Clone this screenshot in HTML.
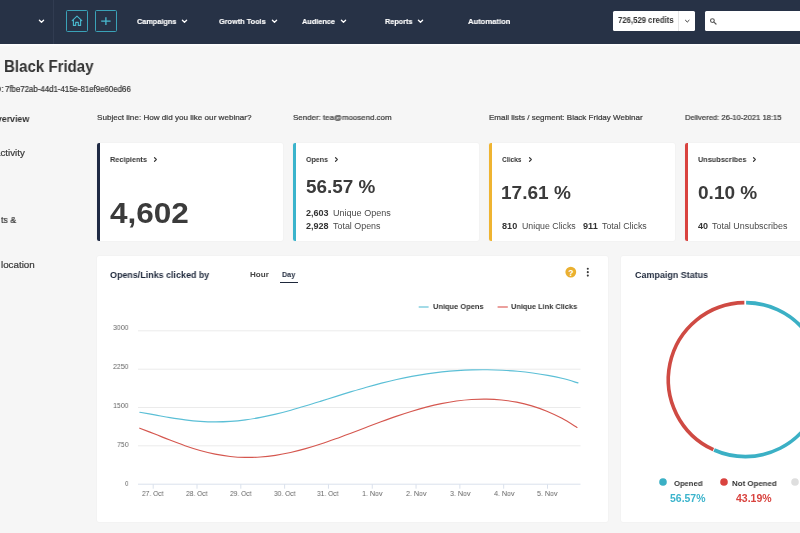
<!DOCTYPE html>
<html><head><meta charset="utf-8"><title>Black Friday</title>
<style>
*{box-sizing:border-box;margin:0;padding:0}
html,body{width:800px;height:533px;overflow:hidden;background:#f6f6f6;font-family:"Liberation Sans",sans-serif;color:#333}
.abs{position:absolute;white-space:nowrap}
.t{position:absolute;white-space:nowrap;line-height:1;transform-origin:0 0;will-change:transform}
#nav{position:absolute;left:0;top:0;width:800px;height:44px;background:#273246}
.ibtn{position:absolute;top:10.3px;width:22px;height:21.6px;border:1px solid #3aa2b8;border-radius:1.5px}
.card{position:absolute;background:#fff;box-shadow:0 0 2px rgba(0,0,0,0.06);border-radius:2px}
</style></head><body>
<div id="nav"></div>
<div class="abs" style="left:0;top:44px;width:800px;height:2.5px;background:linear-gradient(#ffffff,#f6f6f6)"></div>
<div class="abs" style="left:52.5px;top:0;width:1px;height:44px;background:#313c51"></div>
<svg class="abs" style="left:37.9px;top:19.0px" width="7" height="5" viewBox="0 0 7 5"><path d="M1.4 1.3 L3.5 3.3 L5.6 1.3" fill="none" stroke="#fff" stroke-width="1.3" stroke-linecap="round" stroke-linejoin="round"/></svg>
<div class="ibtn" style="left:66px"></div><div class="ibtn" style="left:95px"></div>
<svg class="abs" style="left:66px;top:10px" width="52" height="22" viewBox="66 10 52 22"><path d="M72.2 20.6 L77 16.2 L81.8 20.6 M73.4 19.8 V25.4 H75.7 V22.4 H78.3 V25.4 H80.6 V19.8" fill="none" stroke="#49b9cf" stroke-width="1.1" stroke-linejoin="round" stroke-linecap="round"/><path d="M105.9 17.2 V24.9 M101.2 21.05 H110.6" fill="none" stroke="#49b9cf" stroke-width="1.3"/></svg>
<svg class="abs" style="left:180.9px;top:18.9px" width="7" height="5" viewBox="0 0 7 5"><path d="M1.4 1.3 L3.5 3.3 L5.6 1.3" fill="none" stroke="#fff" stroke-width="1.3" stroke-linecap="round" stroke-linejoin="round"/></svg>
<svg class="abs" style="left:271.0px;top:18.9px" width="7" height="5" viewBox="0 0 7 5"><path d="M1.4 1.3 L3.5 3.3 L5.6 1.3" fill="none" stroke="#fff" stroke-width="1.3" stroke-linecap="round" stroke-linejoin="round"/></svg>
<svg class="abs" style="left:339.5px;top:18.9px" width="7" height="5" viewBox="0 0 7 5"><path d="M1.4 1.3 L3.5 3.3 L5.6 1.3" fill="none" stroke="#fff" stroke-width="1.3" stroke-linecap="round" stroke-linejoin="round"/></svg>
<svg class="abs" style="left:417.0px;top:18.9px" width="7" height="5" viewBox="0 0 7 5"><path d="M1.4 1.3 L3.5 3.3 L5.6 1.3" fill="none" stroke="#fff" stroke-width="1.3" stroke-linecap="round" stroke-linejoin="round"/></svg>
<div class="abs" style="left:612.8px;top:11.2px;width:82.7px;height:19.5px;background:#fff;border-radius:1.5px"></div>
<div class="abs" style="left:678px;top:11.2px;width:1px;height:19.5px;background:#e6e6e6"></div>
<svg class="abs" style="left:684px;top:19px" width="7" height="5" viewBox="684 19 7 5"><path d="M685.5 20.3 L687.3 22 L689.1 20.3" fill="none" stroke="#3a3a3a" stroke-width="1.0" stroke-linecap="round" stroke-linejoin="round"/></svg>
<div class="abs" style="left:705.4px;top:11.2px;width:100px;height:19.5px;background:#fff;border-radius:1.5px"></div>
<svg class="abs" style="left:709px;top:17px" width="9" height="9" viewBox="709 17 9 9"><circle cx="712.4" cy="20.6" r="1.9" fill="none" stroke="#555" stroke-width="1.1"/><path d="M713.9 22.1 L716 24" stroke="#555" stroke-width="1.2" stroke-linecap="round"/></svg>
<div class="card" style="left:97px;top:143px;width:185.5px;height:98.2px"></div><div class="abs" style="left:97px;top:143px;width:2.5px;height:98.2px;background:#1f2a44;border-radius:2px 0 0 2px"></div>
<div class="card" style="left:293px;top:143px;width:185.5px;height:98.2px"></div><div class="abs" style="left:293px;top:143px;width:2.5px;height:98.2px;background:#3bb4cc;border-radius:2px 0 0 2px"></div>
<div class="card" style="left:489px;top:143px;width:185.5px;height:98.2px"></div><div class="abs" style="left:489px;top:143px;width:2.5px;height:98.2px;background:#efb431;border-radius:2px 0 0 2px"></div>
<div class="card" style="left:685px;top:143px;width:185.5px;height:98.2px"></div><div class="abs" style="left:685px;top:143px;width:2.5px;height:98.2px;background:#d9433f;border-radius:2px 0 0 2px"></div>
<svg class="abs" style="left:152.8px;top:155.9px" width="5" height="7" viewBox="0 0 5 7"><path d="M1.5 1.6 L3.3 3.5 L1.5 5.4" fill="none" stroke="#333" stroke-width="1.2" stroke-linecap="round" stroke-linejoin="round"/></svg>
<svg class="abs" style="left:334.2px;top:155.9px" width="5" height="7" viewBox="0 0 5 7"><path d="M1.5 1.6 L3.3 3.5 L1.5 5.4" fill="none" stroke="#333" stroke-width="1.2" stroke-linecap="round" stroke-linejoin="round"/></svg>
<svg class="abs" style="left:528.0px;top:155.9px" width="5" height="7" viewBox="0 0 5 7"><path d="M1.5 1.6 L3.3 3.5 L1.5 5.4" fill="none" stroke="#333" stroke-width="1.2" stroke-linecap="round" stroke-linejoin="round"/></svg>
<svg class="abs" style="left:751.9px;top:155.9px" width="5" height="7" viewBox="0 0 5 7"><path d="M1.5 1.6 L3.3 3.5 L1.5 5.4" fill="none" stroke="#333" stroke-width="1.2" stroke-linecap="round" stroke-linejoin="round"/></svg>
<div class="card" style="left:97px;top:255.5px;width:510.6px;height:266.5px"></div>
<div class="card" style="left:621.3px;top:255.5px;width:200px;height:266.5px"></div>
<div class="abs" style="left:279.8px;top:281.9px;width:18.4px;height:1.5px;background:#1e283b"></div>
<svg class="abs" style="left:564px;top:266px" width="28" height="14" viewBox="564 266 28 14"><circle cx="570.8" cy="272.1" r="5.4" fill="#eab030"/><text x="570.8" y="275.5" font-size="8.5" font-weight="bold" fill="#fff" text-anchor="middle" font-family="Liberation Sans, sans-serif">?</text><circle cx="587.8" cy="268.7" r="1.05" fill="#3a3a3a"/><circle cx="587.8" cy="272.15" r="1.05" fill="#3a3a3a"/><circle cx="587.8" cy="275.6" r="1.05" fill="#3a3a3a"/></svg>
<svg class="abs" style="left:0;top:255px" width="800" height="278" viewBox="0 255 800 278">
<line x1="138" y1="330.8" x2="580.5" y2="330.8" stroke="#ebebeb" stroke-width="1"/>
<line x1="138" y1="369.2" x2="580.5" y2="369.2" stroke="#ebebeb" stroke-width="1"/>
<line x1="138" y1="407.5" x2="580.5" y2="407.5" stroke="#ebebeb" stroke-width="1"/>
<line x1="138" y1="445.8" x2="580.5" y2="445.8" stroke="#ebebeb" stroke-width="1"/>
<line x1="138" y1="484.2" x2="580.5" y2="484.2" stroke="#dae1ec" stroke-width="1"/>
<line x1="153.20" y1="484.2" x2="153.20" y2="488.7" stroke="#dae1ec" stroke-width="1"/>
<line x1="197.01" y1="484.2" x2="197.01" y2="488.7" stroke="#dae1ec" stroke-width="1"/>
<line x1="240.82" y1="484.2" x2="240.82" y2="488.7" stroke="#dae1ec" stroke-width="1"/>
<line x1="284.63" y1="484.2" x2="284.63" y2="488.7" stroke="#dae1ec" stroke-width="1"/>
<line x1="328.44" y1="484.2" x2="328.44" y2="488.7" stroke="#dae1ec" stroke-width="1"/>
<line x1="372.25" y1="484.2" x2="372.25" y2="488.7" stroke="#dae1ec" stroke-width="1"/>
<line x1="416.06" y1="484.2" x2="416.06" y2="488.7" stroke="#dae1ec" stroke-width="1"/>
<line x1="459.87" y1="484.2" x2="459.87" y2="488.7" stroke="#dae1ec" stroke-width="1"/>
<line x1="503.68" y1="484.2" x2="503.68" y2="488.7" stroke="#dae1ec" stroke-width="1"/>
<line x1="547.49" y1="484.2" x2="547.49" y2="488.7" stroke="#dae1ec" stroke-width="1"/>
<path d="M139.75 412.24 C142.27 412.69 149.82 414.02 154.86 414.92 C159.90 415.81 164.94 416.80 169.97 417.63 C175.01 418.46 180.05 419.26 185.09 419.89 C190.12 420.51 195.16 421.04 200.20 421.38 C205.24 421.72 210.27 421.91 215.31 421.91 C220.35 421.92 225.39 421.75 230.42 421.41 C235.46 421.07 240.50 420.55 245.53 419.89 C250.57 419.22 255.61 418.38 260.65 417.42 C265.68 416.46 270.72 415.34 275.76 414.14 C280.80 412.93 285.83 411.59 290.87 410.20 C295.91 408.81 300.95 407.31 305.98 405.80 C311.02 404.29 316.06 402.70 321.09 401.12 C326.13 399.54 331.17 397.92 336.21 396.35 C341.24 394.77 346.28 393.18 351.32 391.65 C356.36 390.12 361.39 388.61 366.43 387.19 C371.47 385.76 376.51 384.38 381.54 383.09 C386.58 381.80 391.62 380.57 396.66 379.45 C401.69 378.32 406.73 377.28 411.77 376.35 C416.80 375.41 421.84 374.57 426.88 373.83 C431.92 373.09 436.95 372.46 441.99 371.92 C447.03 371.39 452.07 370.95 457.10 370.62 C462.14 370.29 467.18 370.05 472.22 369.92 C477.25 369.78 482.29 369.74 487.33 369.80 C492.36 369.85 497.40 370.00 502.44 370.25 C507.48 370.50 512.51 370.84 517.55 371.29 C522.59 371.74 527.63 372.28 532.66 372.95 C537.70 373.62 542.74 374.38 547.78 375.32 C552.81 376.26 557.85 377.30 562.89 378.56 C567.93 379.83 575.48 382.19 578.00 382.92" fill="none" stroke="#5bbfd6" stroke-width="1.15" stroke-linecap="round"/>
<path d="M139.75 428.18 C142.26 429.15 149.80 432.06 154.83 434.04 C159.85 436.02 164.88 438.13 169.91 440.07 C174.93 442.02 179.96 443.96 184.98 445.69 C190.01 447.42 195.03 449.06 200.06 450.47 C205.09 451.87 210.11 453.11 215.14 454.11 C220.16 455.11 225.19 455.90 230.22 456.45 C235.24 457.00 240.27 457.31 245.29 457.41 C250.32 457.50 255.34 457.35 260.37 457.00 C265.40 456.65 270.42 456.07 275.45 455.31 C280.47 454.55 285.50 453.57 290.53 452.46 C295.55 451.34 300.58 450.03 305.60 448.62 C310.63 447.21 315.66 445.63 320.68 443.98 C325.71 442.34 330.73 440.57 335.76 438.77 C340.78 436.97 345.81 435.07 350.84 433.18 C355.86 431.30 360.89 429.35 365.91 427.46 C370.94 425.56 375.97 423.64 380.99 421.80 C386.02 419.96 391.04 418.13 396.07 416.41 C401.09 414.69 406.12 413.02 411.15 411.48 C416.17 409.94 421.20 408.48 426.22 407.17 C431.25 405.87 436.28 404.67 441.30 403.65 C446.33 402.63 451.35 401.74 456.38 401.05 C461.41 400.36 466.43 399.82 471.46 399.49 C476.48 399.16 481.51 399.01 486.53 399.09 C491.56 399.16 496.59 399.43 501.61 399.95 C506.64 400.46 511.66 401.19 516.69 402.18 C521.72 403.17 526.74 404.38 531.77 405.89 C536.79 407.40 541.82 409.15 546.84 411.22 C551.87 413.30 556.90 415.64 561.92 418.34 C566.95 421.04 574.49 425.92 577.00 427.44" fill="none" stroke="#d5574f" stroke-width="1.15" stroke-linecap="round"/>
<line x1="418.7" y1="307" x2="428.6" y2="307" stroke="#4fbad2" stroke-width="1.05"/>
<line x1="497.6" y1="307" x2="507.8" y2="307" stroke="#d94a44" stroke-width="1.05"/>
<path d="M746.11 302.60 A77.0 77.0 0 1 1 714.10 450.00" fill="none" stroke="#3bb0c5" stroke-width="3.6"/>
<path d="M713.37 449.67 A77.0 77.0 0 0 1 744.36 302.61" fill="none" stroke="#cf4a43" stroke-width="3.6"/>
<circle cx="663" cy="482" r="3.8" fill="#3bb0c5"/><circle cx="724" cy="482" r="3.8" fill="#d9433f"/><circle cx="795" cy="482" r="3.8" fill="#dedede"/>
</svg>
<div class="t" style="left:136.50px;top:17.63px;font-size:8px;font-weight:bold;color:#fff;-webkit-text-stroke:0.15px #fff;transform:scaleX(0.9113)">Campaigns</div>
<div class="t" style="left:219.30px;top:17.63px;font-size:8px;font-weight:bold;color:#fff;-webkit-text-stroke:0.15px #fff;transform:scaleX(0.9164)">Growth Tools</div>
<div class="t" style="left:302.00px;top:17.63px;font-size:8px;font-weight:bold;color:#fff;-webkit-text-stroke:0.15px #fff;transform:scaleX(0.9163)">Audience</div>
<div class="t" style="left:384.50px;top:17.63px;font-size:8px;font-weight:bold;color:#fff;-webkit-text-stroke:0.15px #fff;transform:scaleX(0.9098)">Reports</div>
<div class="t" style="left:467.50px;top:17.63px;font-size:8px;font-weight:bold;color:#fff;-webkit-text-stroke:0.15px #fff;transform:scaleX(0.9540)">Automation</div>
<div class="t" style="left:618.00px;top:17.26px;font-size:8.2px;font-weight:bold;color:#333;transform:scaleX(0.9465)">726,529 credits</div>
<div class="t" style="left:3.96px;top:58.66px;font-size:16px;font-weight:bold;color:#333;transform:scaleX(0.9410)">Black Friday</div>
<div class="t" style="left:5.25px;top:84.89px;font-size:8.4px;font-weight:normal;color:#333;-webkit-text-stroke:0.2px #333;transform:scaleX(0.9374)">7fbe72ab-44d1-415e-81ef9e60ed66</div>
<div class="t" style="left:-7.50px;top:84.89px;font-size:8.4px;font-weight:normal;color:#333;-webkit-text-stroke:0.2px #333;transform:scaleX(0.9735)">ID:</div>
<div class="t" style="left:-9.90px;top:114.27px;font-size:9.6px;font-weight:bold;color:#333;transform:scaleX(0.9189)">Overview</div>
<div class="t" style="left:-6.50px;top:148.07px;font-size:9.6px;font-weight:normal;color:#3a3a3a;-webkit-text-stroke:0.2px #333;transform:scaleX(1.0135)">Activity</div>
<div class="t" style="left:1.10px;top:214.64px;font-size:9.4px;font-weight:normal;color:#3a3a3a;-webkit-text-stroke:0.2px #333;transform:scaleX(0.9351)">ts &amp;</div>
<div class="t" style="left:1.40px;top:259.97px;font-size:9.6px;font-weight:normal;color:#3a3a3a;-webkit-text-stroke:0.2px #333;transform:scaleX(1.0204)">location</div>
<div class="t" style="left:97.00px;top:113.83px;font-size:8px;font-weight:normal;color:#3c3c3c;-webkit-text-stroke:0.22px #3c3c3c;transform:scaleX(1.0126)">Subject line: How did you like our webinar?</div>
<div class="t" style="left:293.00px;top:113.83px;font-size:8px;font-weight:normal;color:#3c3c3c;-webkit-text-stroke:0.22px #3c3c3c;transform:scaleX(0.9893)">Sender: tea@moosend.com</div>
<div class="t" style="left:489.00px;top:113.83px;font-size:8px;font-weight:normal;color:#3c3c3c;-webkit-text-stroke:0.22px #3c3c3c;transform:scaleX(0.9999)">Email lists / segment: Black Friday Webinar</div>
<div class="t" style="left:685.00px;top:113.83px;font-size:8px;font-weight:normal;color:#3c3c3c;-webkit-text-stroke:0.22px #3c3c3c;transform:scaleX(0.9514)">Delivered: 26-10-2021 18:15</div>
<div class="t" style="left:110.00px;top:155.53px;font-size:8px;font-weight:bold;color:#333;transform:scaleX(0.9145)">Recipients</div>
<div class="t" style="left:110.00px;top:198.05px;font-size:30.3px;font-weight:bold;color:#3b3b3b;transform:scaleX(1.0405)">4,602</div>
<div class="t" style="left:306.00px;top:155.53px;font-size:8px;font-weight:bold;color:#333;transform:scaleX(0.8842)">Opens</div>
<div class="t" style="left:306.00px;top:177.50px;font-size:18.9px;font-weight:bold;color:#3b3b3b;transform:scaleX(0.9997)">56.57 %</div>
<div class="t" style="left:305.60px;top:209.40px;font-size:8.5px;font-weight:bold;color:#333;transform:scaleX(1.0630)">2,603</div>
<div class="t" style="left:332.75px;top:209.40px;font-size:8.5px;font-weight:normal;color:#4a4a4a;transform:scaleX(1.0630)">Unique Opens</div>
<div class="t" style="left:305.60px;top:221.80px;font-size:8.5px;font-weight:bold;color:#333;transform:scaleX(1.0630)">2,928</div>
<div class="t" style="left:332.75px;top:221.80px;font-size:8.5px;font-weight:normal;color:#4a4a4a;transform:scaleX(1.0474)">Total Opens</div>
<div class="t" style="left:502.00px;top:155.53px;font-size:8px;font-weight:bold;color:#333;transform:scaleX(0.8291)">Clicks</div>
<div class="t" style="left:501.49px;top:184.00px;font-size:18.9px;font-weight:bold;color:#3b3b3b;transform:scaleX(1.0070)">17.61 %</div>
<div class="t" style="left:502.00px;top:222.00px;font-size:8.5px;font-weight:bold;color:#333;transform:scaleX(1.0723)">810</div>
<div class="t" style="left:521.50px;top:222.00px;font-size:8.5px;font-weight:normal;color:#4a4a4a;transform:scaleX(1.0346)">Unique Clicks</div>
<div class="t" style="left:582.50px;top:222.00px;font-size:8.5px;font-weight:bold;color:#333;transform:scaleX(1.0725)">911</div>
<div class="t" style="left:602.00px;top:222.00px;font-size:8.5px;font-weight:normal;color:#4a4a4a;transform:scaleX(1.0414)">Total Clicks</div>
<div class="t" style="left:697.70px;top:155.53px;font-size:8px;font-weight:bold;color:#333;transform:scaleX(0.9148)">Unsubscribes</div>
<div class="t" style="left:697.70px;top:183.70px;font-size:18.9px;font-weight:bold;color:#3b3b3b;transform:scaleX(1.0082)">0.10 %</div>
<div class="t" style="left:697.70px;top:221.90px;font-size:8.5px;font-weight:bold;color:#333;transform:scaleX(1.0589)">40</div>
<div class="t" style="left:711.90px;top:221.90px;font-size:8.5px;font-weight:normal;color:#4a4a4a;transform:scaleX(1.0495)">Total Unsubscribes</div>
<div class="t" style="left:109.80px;top:270.81px;font-size:9.2px;font-weight:bold;color:#1e283b;transform:scaleX(0.9717)">Opens/Links clicked by</div>
<div class="t" style="left:249.50px;top:270.83px;font-size:8px;font-weight:bold;color:#444;transform:scaleX(1.0080)">Hour</div>
<div class="t" style="left:282.00px;top:270.83px;font-size:8px;font-weight:bold;color:#1e283b;transform:scaleX(0.8997)">Day</div>
<div class="t" style="left:433.00px;top:303.00px;font-size:7.8px;font-weight:bold;color:#333;transform:scaleX(0.9568)">Unique Opens</div>
<div class="t" style="left:511.40px;top:303.00px;font-size:7.8px;font-weight:bold;color:#333;transform:scaleX(0.9486)">Unique Link Clicks</div>
<div class="t" style="left:112.70px;top:324.40px;font-size:7.8px;font-weight:normal;color:#666;transform:scaleX(0.8940)">3000</div>
<div class="t" style="left:112.70px;top:363.40px;font-size:7.8px;font-weight:normal;color:#666;transform:scaleX(0.8940)">2250</div>
<div class="t" style="left:112.70px;top:402.40px;font-size:7.8px;font-weight:normal;color:#666;transform:scaleX(0.8940)">1500</div>
<div class="t" style="left:116.70px;top:441.30px;font-size:7.8px;font-weight:normal;color:#666;transform:scaleX(0.8850)">750</div>
<div class="t" style="left:124.80px;top:480.30px;font-size:7.8px;font-weight:normal;color:#666;transform:scaleX(0.8000)">0</div>
<div class="t" style="left:142.20px;top:490.20px;font-size:7.8px;font-weight:normal;color:#666;transform:scaleX(0.8549)">27. Oct</div>
<div class="t" style="left:186.01px;top:490.20px;font-size:7.8px;font-weight:normal;color:#666;transform:scaleX(0.8549)">28. Oct</div>
<div class="t" style="left:229.82px;top:490.20px;font-size:7.8px;font-weight:normal;color:#666;transform:scaleX(0.8549)">29. Oct</div>
<div class="t" style="left:273.63px;top:490.20px;font-size:7.8px;font-weight:normal;color:#666;transform:scaleX(0.8549)">30. Oct</div>
<div class="t" style="left:317.44px;top:490.20px;font-size:7.8px;font-weight:normal;color:#666;transform:scaleX(0.8549)">31. Oct</div>
<div class="t" style="left:362.10px;top:490.20px;font-size:7.8px;font-weight:normal;color:#666;transform:scaleX(0.9057)">1. Nov</div>
<div class="t" style="left:405.91px;top:490.20px;font-size:7.8px;font-weight:normal;color:#666;transform:scaleX(0.9057)">2. Nov</div>
<div class="t" style="left:449.72px;top:490.20px;font-size:7.8px;font-weight:normal;color:#666;transform:scaleX(0.9057)">3. Nov</div>
<div class="t" style="left:493.53px;top:490.20px;font-size:7.8px;font-weight:normal;color:#666;transform:scaleX(0.9057)">4. Nov</div>
<div class="t" style="left:537.34px;top:490.20px;font-size:7.8px;font-weight:normal;color:#666;transform:scaleX(0.9057)">5. Nov</div>
<div class="t" style="left:634.50px;top:270.88px;font-size:9px;font-weight:bold;color:#1e283b;transform:scaleX(0.9931)">Campaign Status</div>
<div class="t" style="left:673.60px;top:479.63px;font-size:8px;font-weight:bold;color:#333;transform:scaleX(0.9500)">Opened</div>
<div class="t" style="left:731.60px;top:479.63px;font-size:8px;font-weight:bold;color:#333;transform:scaleX(0.9858)">Not Opened</div>
<div class="t" style="left:670.00px;top:494.37px;font-size:10.2px;font-weight:bold;color:#3bb4cc;transform:scaleX(1.0263)">56.57%</div>
<div class="t" style="left:736.00px;top:494.37px;font-size:10.2px;font-weight:bold;color:#d9433f;transform:scaleX(1.0321)">43.19%</div>
</body></html>
